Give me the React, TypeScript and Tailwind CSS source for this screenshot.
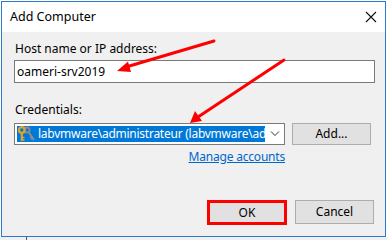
const font = { fontFamily: '"Noto Sans", "Open Sans", sans-serif' };

const KeyIcon = () => (
  <svg width="17" height="16" viewBox="0 0 17 16" className="shrink-0">
    {/* gray key behind */}
    <circle cx="9" cy="4" r="2.6" fill="none" stroke="#8c8c8c" strokeWidth="2" />
    <path d="M10.5 6 L16 14" stroke="#8c8c8c" strokeWidth="2" />
    <path d="M13.4 10.5 L11.8 11.6 M14.6 12.2 L13 13.3" stroke="#8c8c8c" strokeWidth="1.4" />
    {/* gold key */}
    <circle cx="3.8" cy="4" r="2.8" fill="none" stroke="#e0a526" strokeWidth="2.2" />
    <path d="M3.8 6.5 V15" stroke="#e0a526" strokeWidth="2.2" />
    <path d="M4.5 11.5 H6.5 M4.5 14 H6.5" stroke="#e0a526" strokeWidth="1.6" />
  </svg>
);

const Arrows = () => (
  <svg className="absolute inset-0 pointer-events-none" width="388" height="240" viewBox="0 0 388 240">
    <path d="M214 41 L126 67" stroke="#ff0000" strokeWidth="3" strokeLinecap="round" />
    <polygon points="117,71 128,61.5 131,72" fill="#ff0000" />
    <path d="M284 60 L198 117" stroke="#ff0000" strokeWidth="3" strokeLinecap="round" />
    <polygon points="190,123 195,111 202,121" fill="#ff0000" />
  </svg>
);

export default function App() {
  return (
    <div className="relative w-[388px] h-[240px] overflow-hidden bg-white text-[12px] text-black" style={font}>
      <div className="ml-[1px] mt-[1px] w-[385px] h-[236px] border border-[#2b79d1] bg-[#f0f0f0] flex flex-col">
        {/* title bar */}
        <div className="h-[30px] bg-white flex items-center justify-between pl-[8px] pr-[8px] shrink-0">
          <span className="text-[12.5px] leading-4">Add Computer</span>
          <svg width="12" height="12" viewBox="0 0 12 12">
            <path d="M1 1 L11 11 M11 1 L1 11" stroke="#111" strokeWidth="1.1" />
          </svg>
        </div>

        {/* body */}
        <div className="flex flex-col pl-[12px] pr-[10px] pt-[9px] flex-1">
          <label className="leading-4 pl-[1px]">Host name or IP address:</label>
          <div className="mt-[3px] h-[23px] border border-[#7a7a7a] bg-white flex items-center pl-[2px]">
            oameri-srv2019
          </div>

          <label className="leading-4 mt-[19px] pl-[1px]">Credentials:</label>
          <div className="mt-[5px] flex items-start gap-[7px]">
            <div className="w-[271px] h-[22px] border border-[#7a7a7a] bg-white flex items-center pl-[2px] pr-[4px]">
              <div className="w-[248px] h-[16px] bg-[#0078d7] text-white flex items-center gap-[3px] pl-[1px]">
                <KeyIcon />
                <span className="leading-4 min-w-0 overflow-hidden whitespace-nowrap tracking-[-0.25px]">
                  labvmware\administrateur (labvmware\adm
                </span>
              </div>
              <svg width="10" height="6" viewBox="0 0 10 6" className="ml-auto">
                <path d="M1 0.5 L5 4.5 L9 0.5" fill="none" stroke="#333" strokeWidth="1" />
              </svg>
            </div>
            <button className="w-[79px] h-[22px] border border-[#adadad] bg-[#e1e1e1] leading-4">Add...</button>
          </div>
          <div className="w-[271px] flex justify-end mt-[4px]">
            <a className="text-[#0066cc] underline leading-4 tracking-[-0.2px]">Manage accounts</a>
          </div>

          <div className="mt-auto mb-[11px] flex justify-end gap-[8px] pr-[1px]">
            <div className="w-[80px] h-[25px] border-[3px] border-[#ff0000] bg-[#e1e1e1] flex items-center justify-center leading-4">
              OK
            </div>
            <button className="w-[79px] h-[24px] border border-[#adadad] bg-[#e1e1e1] leading-4">Cancel</button>
          </div>
        </div>
      </div>
      <div className="h-[3px] bg-[#f0f0f0] flex">
        <div className="w-[26px]" />
        <div className="w-[1px] bg-[#555]" />
      </div>
      <Arrows />
    </div>
  );
}
